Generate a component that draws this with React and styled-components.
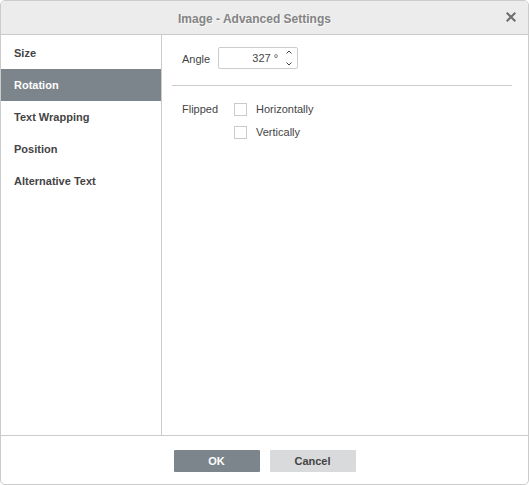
import React, { useState } from "react";
import styled, { createGlobalStyle } from "styled-components";

const GlobalStyle = createGlobalStyle`
  *, *::before, *::after { box-sizing: border-box; }
  body {
    margin: 0;
    background: #fff;
    color: #444;
    font: 11px/14px "Liberation Sans", Arial, sans-serif;
  }
  button, input { font: inherit; color: inherit; }
`;

const Dialog = styled.div`
  display: flex;
  flex-direction: column;
  min-height: 100vh;
  border: 1px solid #cbcbcb;
  border-radius: 5px;
  overflow: hidden;
  background: #fff;
`;

const Header = styled.header`
  display: grid;
  grid-template-columns: 34px 1fr 34px;
  align-items: center;
  height: 34px;
  padding-bottom: 1px;
  border-bottom: 1px solid #cbcbcb;
  background: #ececec;
`;

const Title = styled.h1`
  grid-column: 2;
  margin: 0;
  padding: 3px 20px 0 0;
  text-align: center;
  font-size: 12px;
  line-height: 14px;
  font-weight: bold;
  color: #848484;
  text-shadow: 1px 1px #f8f8f8;
`;

const CloseButton = styled.button`
  display: flex;
  justify-content: center;
  padding: 4px;
  border: 0;
  background: none;
  color: #6e6e6e;
  cursor: pointer;
`;

const Body = styled.div`
  display: flex;
  flex: 1;
`;

const Menu = styled.nav`
  display: flex;
  flex-direction: column;
  flex: 0 0 161px;
  padding-top: 2px;
  border-right: 1px solid #cbcbcb;
`;

const MenuItem = styled.button`
  height: 32px;
  padding: 0 13px;
  border: 0;
  text-align: left;
  font-weight: bold;
  cursor: pointer;
  background: ${(p) => (p.$active ? "#7d858c" : "transparent")};
  color: ${(p) => (p.$active ? "#fff" : "#444")};
`;

const Panel = styled.main`
  flex: 1;
  padding: 12px 16px 0 10px;
`;

const AngleRow = styled.div`
  display: flex;
  align-items: center;
  gap: 8px;
  padding-left: 10px;
`;

const AngleLabel = styled.label`
  padding-top: 2px;
`;

const Spinner = styled.div`
  display: flex;
  width: 80px;
  height: 22px;
  border: 1px solid #cbcbcb;
  border-radius: 2px;
`;

const SpinnerInput = styled.input`
  flex: 1;
  min-width: 0;
  padding: 0 3px 0 0;
  border: 0;
  outline: 0;
  background: none;
  text-align: right;
`;

const Steps = styled.div`
  display: flex;
  flex-direction: column;
  width: 16px;
`;

const Step = styled.button`
  display: flex;
  flex: 1;
  align-items: center;
  justify-content: center;
  padding: 0;
  border: 0;
  background: none;
  cursor: pointer;
`;

const Separator = styled.hr`
  height: 1px;
  margin: 16px 0;
  border: 0;
  background: #cbcbcb;
`;

const FlipGroup = styled.fieldset`
  display: grid;
  grid-template-columns: 52px 1fr;
  margin: 0;
  padding: 0 0 0 10px;
  border: 0;
`;

const Options = styled.div`
  display: flex;
  flex-direction: column;
  align-items: flex-start;
  gap: 9px;
`;

const Option = styled.label`
  display: flex;
  align-items: center;
  gap: 9px;
`;

const Checkbox = styled.input`
  appearance: none;
  width: 13px;
  height: 13px;
  margin: 0;
  border: 1px solid #cbcbcb;
  background: #fff;
  &:checked {
    background: #7d858c;
    box-shadow: inset 0 0 0 2px #fff;
  }
`;

const Footer = styled.footer`
  display: flex;
  justify-content: center;
  gap: 10px;
  padding: 14px 0 12px;
  border-top: 1px solid #cbcbcb;
`;

const ActionButton = styled.button`
  width: 86px;
  height: 22px;
  padding: 0;
  border: 0;
  border-radius: 1px;
  font-weight: bold;
  cursor: pointer;
  background: ${(p) => (p.$primary ? "#7d858c" : "#d8dadc")};
  color: ${(p) => (p.$primary ? "#fff" : "#444")};
`;

const SECTIONS = ["Size", "Rotation", "Text Wrapping", "Position", "Alternative Text"];

function Chevron({ down }) {
  return (
    <svg width="6" height="6" viewBox="0 0 6 6" fill="none" stroke="#444" aria-hidden="true">
      <path d={down ? "M.5 2.5 3 5 5.5 2.5" : "M.5 3.5 3 1 5.5 3.5"} />
    </svg>
  );
}

export default function App() {
  const [section, setSection] = useState("Rotation");
  const [angle, setAngle] = useState("327 °");
  const step = (n) => setAngle(`${(parseInt(angle, 10) || 0) + n} °`);

  return (
    <>
      <GlobalStyle />
      <Dialog role="dialog" aria-labelledby="dialog-title">
        <Header>
          <Title id="dialog-title">Image - Advanced Settings</Title>
          <CloseButton aria-label="Close">
            <svg width="10" height="10" viewBox="0 0 10 10" stroke="currentColor" strokeWidth="2" aria-hidden="true">
              <path d="M.7 .7 9.3 9.3M9.3 .7 .7 9.3" />
            </svg>
          </CloseButton>
        </Header>
        <Body>
          <Menu>
            {SECTIONS.map((name) => (
              <MenuItem key={name} $active={name === section} onClick={() => setSection(name)}>
                {name}
              </MenuItem>
            ))}
          </Menu>
          <Panel>
            <AngleRow>
              <AngleLabel htmlFor="angle">Angle</AngleLabel>
              <Spinner>
                <SpinnerInput id="angle" value={angle} onChange={(e) => setAngle(e.target.value)} />
                <Steps>
                  <Step aria-label="Increase angle" onClick={() => step(1)}>
                    <Chevron />
                  </Step>
                  <Step aria-label="Decrease angle" onClick={() => step(-1)}>
                    <Chevron down />
                  </Step>
                </Steps>
              </Spinner>
            </AngleRow>
            <Separator />
            <FlipGroup aria-labelledby="flip-label">
              <span id="flip-label">Flipped</span>
              <Options>
                <Option>
                  <Checkbox type="checkbox" />
                  Horizontally
                </Option>
                <Option>
                  <Checkbox type="checkbox" />
                  Vertically
                </Option>
              </Options>
            </FlipGroup>
          </Panel>
        </Body>
        <Footer>
          <ActionButton $primary>OK</ActionButton>
          <ActionButton>Cancel</ActionButton>
        </Footer>
      </Dialog>
    </>
  );
}
